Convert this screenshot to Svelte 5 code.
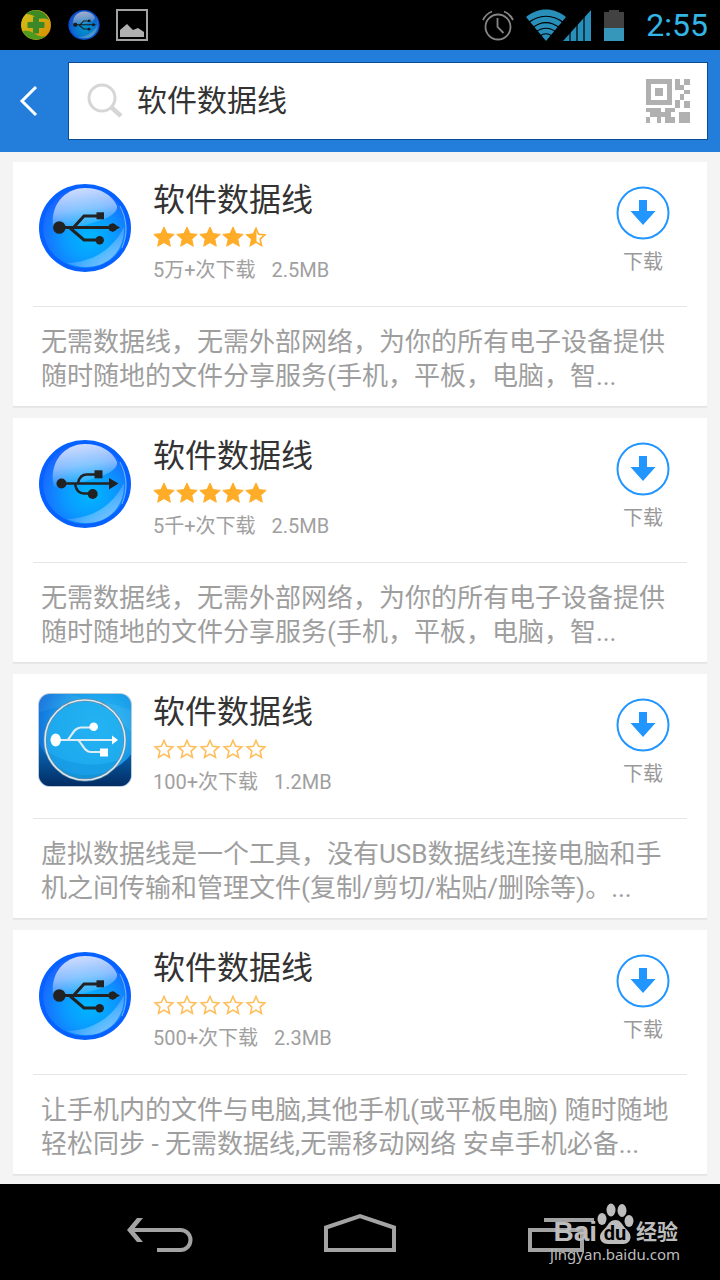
<script>
	let query = $state('软件数据线');

	const apps = [
		{
			name: '软件数据线',
			icon: 'orb-fork',
			rating: 4.5,
			downloads: '5万+次下载',
			size: '2.5MB',
			description:
				'无需数据线，无需外部网络，为你的所有电子设备提供随时随地的文件分享服务(手机，平板，电脑，智...'
		},
		{
			name: '软件数据线',
			icon: 'orb-curve',
			rating: 5,
			downloads: '5千+次下载',
			size: '2.5MB',
			description:
				'无需数据线，无需外部网络，为你的所有电子设备提供随时随地的文件分享服务(手机，平板，电脑，智...'
		},
		{
			name: '软件数据线',
			icon: 'tile',
			rating: 0,
			downloads: '100+次下载',
			size: '1.2MB',
			description:
				'虚拟数据线是一个工具，没有USB数据线连接电脑和手机之间传输和管理文件(复制/剪切/粘贴/删除等)。...'
		},
		{
			name: '软件数据线',
			icon: 'orb-fork',
			rating: 0,
			downloads: '500+次下载',
			size: '2.3MB',
			description:
				'让手机内的文件与电脑,其他手机(或平板电脑) 随时随地轻松同步 - 无需数据线,无需移动网络 安卓手机必备...'
		}
	];

	const starPath = 'M11 1l3 6.6 7.2.8-5.4 4.8 1.5 7L11 16.6l-6.3 3.6 1.5-7L.8 8.4 8 7.6z';
</script>

{#snippet orb(kind)}
	<svg class="orb" viewBox="0 0 94 94" aria-hidden="true">
		<defs>
			<radialGradient id="orb-fill" cx="0.55" cy="0.62" r="0.6">
				<stop offset="0" stop-color="#00b8ff" />
				<stop offset="0.5" stop-color="#0a9aff" />
				<stop offset="1" stop-color="#1a66ff" />
			</radialGradient>
			<linearGradient id="orb-gloss" x1="0.3" y1="0" x2="0.5" y2="1">
				<stop offset="0" stop-color="#fff" stop-opacity="0.8" />
				<stop offset="0.5" stop-color="#fff" stop-opacity="0.5" />
				<stop offset="1" stop-color="#fff" stop-opacity="0" />
			</linearGradient>
			<linearGradient id="orb-shine" x1="0.3" y1="0.3" x2="1" y2="1">
				<stop offset="0" stop-color="#fff" stop-opacity="0" />
				<stop offset="1" stop-color="#fff" stop-opacity="0.6" />
			</linearGradient>
		</defs>
		<ellipse cx="47" cy="47" rx="46" ry="44" fill="#0561ff" />
		<ellipse cx="47" cy="47" rx="42" ry="40" fill="url(#orb-fill)" />
		<path d="M16 50C10 26 26 7 47 7c16 0 27 7 32 18 1 9-14 14-28 18-12 4-23 7-35 7z" fill="url(#orb-gloss)" />
		<path d="M86 46c1 22-14 40-38 40-8 0-14-2-19-4 27-1 46-14 57-36z" fill="url(#orb-shine)" />
		<path d="M82 25c7 13 8 28 2 42" fill="none" stroke="#7fc4ff" stroke-width="1" opacity="0.8" />
		{#if kind === 'orb-fork'}
			<g fill="none" stroke="#222" stroke-width="3">
				<path d="M21 46.500h54M36 46l10-11h14M32 47l14 12h15" />
			</g>
			<g fill="#222">
				<circle cx="21.300" cy="46.500" r="6.300" />
				<circle cx="74.500" cy="46.500" r="4" />
				<path d="M74 42l8 4.500-8 4.500z" />
				<path d="M58.500 31.300h7.500v7h-7.500z" />
				<circle cx="61.700" cy="59.300" r="4.200" />
			</g>
		{:else}
			<g fill="none" stroke="#222" stroke-width="2.400">
				<path d="M23 46.500h50M40 46c1-5 4-8.500 9-8.500h9M37 47c1 6 4 9.500 9 9.500h7" />
			</g>
			<g fill="#222">
				<circle cx="23.500" cy="46.500" r="5" />
				<path d="M71 41l9.500 5.500-9.500 6z" />
				<path d="M56.500 33.300h8v8h-8z" />
				<circle cx="54.700" cy="57" r="5" />
			</g>
		{/if}
	</svg>
{/snippet}

{#snippet tile()}
	<svg viewBox="0 0 94 94" aria-hidden="true">
		<defs>
			<radialGradient id="tile-fill" cx="0.65" cy="0.35" r="0.8">
				<stop offset="0" stop-color="#2fc0fa" />
				<stop offset="0.5" stop-color="#1a9fea" />
				<stop offset="1" stop-color="#0b5cd8" />
			</radialGradient>
			<linearGradient id="tile-dark" x1="0" y1="0" x2="0" y2="1">
				<stop offset="0" stop-color="#0873c6" />
				<stop offset="1" stop-color="#032a60" />
			</linearGradient>
			<clipPath id="tile-clip"><rect x="1" y="1" width="92" height="92" rx="11" /></clipPath>
		</defs>
		<rect x="0" y="0" width="94" height="94" rx="12" fill="#b9cbd9" />
		<g clip-path="url(#tile-clip)">
			<rect width="94" height="94" fill="url(#tile-fill)" />
			<path d="M0 48c8 18 24 34 48 34 20 0 36-8 46-22v34H0z" fill="url(#tile-dark)" />
			<path d="M0 0h30C52 8 76 20 94 40V18C70 6 40 6 0 20z" fill="#fff" opacity="0.06" />
			<circle cx="47" cy="47" r="40" fill="#20aff0" opacity="0.8" />
			<path d="M9 58c12 10 44 20 74 8-8 14-20 21-36 21-18 0-32-11-38-29z" fill="#0d8fda" opacity="0.4" />
		</g>
		<circle cx="47" cy="47" r="40" fill="none" stroke="#5f8aa6" stroke-width="3" />
		<circle cx="47" cy="47" r="40" fill="none" stroke="#dde9f1" stroke-width="1.600" />
		<g fill="none" stroke="#dfecf4" stroke-width="2.200">
			<path d="M17 47h58M30 46.500c4-4 6-12 13-12h12M40 47c5 4 6 12 13 12h10" />
		</g>
		<g fill="#fff">
			<ellipse cx="17.700" cy="47" rx="5.200" ry="6.500" />
			<path d="M74 42.500l6 4.500-6 4.500z" />
			<circle cx="55.700" cy="33.700" r="4.300" />
			<path d="M62 55.500h8v8h-8z" />
		</g>
	</svg>
{/snippet}

{#snippet star(fill)}
	<svg viewBox="0 0 22 22" aria-hidden="true">
		{#if fill >= 1}
			<path d={starPath} fill="#ffad29" stroke="#ffad29" stroke-width="1" stroke-linejoin="round" />
		{:else}
			<path
				d="M11 2.500l2.600 5.800 6.200.6-4.700 4.200 1.400 6.200-5.500-3.200-5.500 3.200 1.400-6.200L2.200 8.900l6.200-.6z"
				fill="#fff"
				stroke={fill > 0 ? '#ffad29' : '#ffbe5c'}
				stroke-width="1.600"
			/>
			{#if fill > 0}
				<path d="M11.500 1L8 7.600.8 8.400l5.400 4.800-1.500 7 6.800-3.900z" fill="#ffad29" />
			{/if}
		{/if}
	</svg>
{/snippet}

<div class="screen">
	<div class="status-bar">
		<div class="status-left">
			<svg viewBox="0 0 32 32" aria-hidden="true">
				<defs>
					<linearGradient id="guard" x1="0" y1="0" x2="1" y2="1">
						<stop offset="0" stop-color="#d0c51f" />
						<stop offset="1" stop-color="#d98b00" />
					</linearGradient>
				</defs>
				<circle cx="16" cy="16" r="15" fill="url(#guard)" />
				<path d="M6 5C14-2 25 1 29 11c-5-3-8 0-12-2-4-3-7-4-11-4z" fill="#3d8a22" />
				<path d="M3 22c3 8 14 12 23 5-5 1-8 0-11-2-4-3-8-4-12-3z" fill="#4c9a20" />
				<path
					d="M13.500 8h5v5.500H24v5h-5.500V24h-5v-5.500H8v-5h5.500z"
					fill="#3c8727"
					stroke="#3c8727"
					stroke-linejoin="round"
				/>
			</svg>
			{@render orb('orb-fork')}
			<svg viewBox="0 0 32 32" aria-hidden="true">
				<rect x="1" y="1" width="30" height="30" fill="none" stroke="#a3a3a3" stroke-width="2" />
				<path d="M4 28v-7l7-6 6 6 5-2 6 4v5z" fill="#b0b0b0" />
			</svg>
		</div>
		<div class="status-right">
			<svg class="alarm" viewBox="0 0 32 32" aria-hidden="true">
				<g fill="none" stroke="#858585" stroke-width="1.800">
					<circle cx="16" cy="18" r="12.500" />
					<path d="M15.500 9v9l6 6M1 11c2-4 5-7 9-8.500M31 11c-2-4-5-7-9-8.500" />
				</g>
			</svg>
			<svg class="signal" viewBox="0 0 66 32" aria-hidden="true">
				<path d="M20 32L0 8c12-10 28-10 40 0z" fill="#278fba" />
				<g fill="none" stroke="#000" stroke-width="1.200">
					<path d="M2 14c11-9 25-9 36 0M6 19c9-7 19-7 28 0M10 23c6-5 14-5 20 0M14 27c4-3 8-3 12 0" />
				</g>
				<path d="M37 32L65 1v31z" fill="#278fba" />
				<path d="M44 18v14M51 12v20M58 5v27" stroke="#000" stroke-width="1.200" />
			</svg>
			<svg class="battery" viewBox="0 0 20 32" aria-hidden="true">
				<path d="M5 1h10v2h5v16H0V3h5z" fill="#424242" />
				<path d="M0 19h20v13H0z" fill="#3797bb" />
			</svg>
			<span class="time">2:55</span>
		</div>
	</div>

	<header>
		<button class="back" aria-label="返回">
			<svg viewBox="0 0 20 32" aria-hidden="true">
				<path d="M17 2L3 16l14 14" fill="none" stroke="#fff" stroke-width="3" />
			</svg>
		</button>
		<div class="search">
			<svg class="magnifier" viewBox="0 0 36 36" aria-hidden="true">
				<g fill="none" stroke="#d6d6d6">
					<circle cx="15" cy="15" r="13" stroke-width="3" />
					<path d="M24 24l10 9" stroke-width="4.500" />
				</g>
			</svg>
			<input type="text" aria-label="搜索" bind:value={query} />
			<button class="scan" aria-label="扫描二维码">
				<svg viewBox="0 0 44 44" shape-rendering="crispEdges" aria-hidden="true">
					<g fill="#b0b0b0">
						<path d="M0 0h26v26H0zM5 5v16h16V5z" fill-rule="evenodd" />
						<path d="M9 9h8v8H9z" />
						<path d="M29 0h5v6h4v5h-9zM38 0h6v6h-6zM38 11h6v4h-6zM34 15h4v6h-4v8h-5v-8h5zM38 22h6v7h-6z" />
						<path d="M0 29h15v4h4v-4h10v4h-4v5h4v6H19v-6h-4v6h-4v-6H4v6H0v-6h4v-5H0z" />
						<path d="M33 33h11v11H33z" />
					</g>
				</svg>
			</button>
		</div>
	</header>

	<main>
		{#each apps as app}
			<article class="card">
				<div class="summary">
					<div class="app-icon">
						{#if app.icon === 'tile'}
							{@render tile()}
						{:else}
							{@render orb(app.icon)}
						{/if}
					</div>
					<div class="info">
						<h2>{app.name}</h2>
						<div class="stars" role="img" aria-label="{app.rating} / 5">
							{#each [0, 1, 2, 3, 4] as i}
								{@render star(app.rating - i)}
							{/each}
						</div>
						<div class="meta">
							<span>{app.downloads}</span>
							<span>{app.size}</span>
						</div>
					</div>
					<button class="download">
						<svg viewBox="0 0 54 54" aria-hidden="true">
							<circle cx="27" cy="27" r="25.500" fill="none" stroke="#2196ff" stroke-width="2" />
							<path d="M23 14h8v11h8.500L27 39 14.500 25H23z" fill="#2196ff" />
						</svg>
						<span>下载</span>
					</button>
				</div>
				<p>{app.description}</p>
			</article>
		{/each}
	</main>

	<nav>
		<button aria-label="后退">
			<svg viewBox="0 0 72 48" aria-hidden="true">
				<path d="M19 10h-6L3 22l10 12h6L9 22z" fill="#a3a3a3" />
				<path d="M6 22h50.500a10 10 0 0 1 0 20H33" fill="none" stroke="#a3a3a3" stroke-width="4" />
			</svg>
		</button>
		<button aria-label="主页">
			<svg viewBox="0 0 72 48" aria-hidden="true">
				<path d="M2 42V19.500L36 8l34 11.500V42z" fill="none" stroke="#a3a3a3" stroke-width="4" />
			</svg>
		</button>
		<button aria-label="最近任务">
			<svg viewBox="0 0 72 48" aria-hidden="true">
				<g fill="none" stroke="#a3a3a3" stroke-width="4">
					<path d="M6 22h52v20H6z" />
					<path d="M20 12h50" />
				</g>
			</svg>
		</button>

		<div class="watermark">
			<div class="brand">
				<span class="bai">Bai</span>
				<span class="paw">
					<svg viewBox="0 0 36 42" aria-hidden="true">
						<g fill="#bdbdbd">
							<ellipse cx="5" cy="17" rx="4.500" ry="6" />
							<ellipse cx="14" cy="8" rx="4.500" ry="6.500" />
							<ellipse cx="25" cy="8.500" rx="4.500" ry="6.500" />
							<ellipse cx="32" cy="19" rx="4.500" ry="6" />
							<path d="M18.500 18c4 0 6 3 8 6 3 4 7 6 7 11 0 4-3 7-7 7H11c-5 0-8-3-8-7 0-5 4-7 7-11 2-3 4-6 8.500-6z" />
						</g>
					</svg>
					<span class="du">du</span>
				</span>
				<span class="exp">经验</span>
			</div>
			<div class="url">jingyan.baidu.com</div>
		</div>
	</nav>
</div>

<style>
	:global(body) {
		background: #000;
	}

	.screen {
		display: flex;
		flex-direction: column;
		min-height: 100vh;
		background: #f4f4f4;
		font-family: Roboto, 'Noto Sans CJK SC', sans-serif;
	}

	svg {
		display: block;
		overflow: visible;
	}

	button {
		padding: 0;
		border: none;
		background: none;
		font-family: inherit;
		cursor: pointer;
	}

	.status-bar {
		display: flex;
		justify-content: space-between;
		align-items: center;
		height: 50px;
		padding: 0 12px 0 20px;
		background: #000;
	}

	.status-left,
	.status-right {
		display: flex;
		align-items: center;
	}

	.status-left {
		gap: 16px;
	}

	.status-left svg {
		width: 32px;
		height: 32px;
	}

	.status-left .orb {
		opacity: 0.8;
	}

	.status-right {
		gap: 12px;
	}

	.status-right svg {
		height: 32px;
	}

	.alarm {
		width: 32px;
	}

	.signal {
		width: 66px;
	}

	.battery {
		width: 20px;
	}

	.time {
		margin-left: 10px;
		font-size: 32px;
		line-height: 48px;
		color: #33b5e5;
	}

	header {
		display: flex;
		align-items: center;
		height: 102px;
		padding-right: 12px;
		background: #237ddb;
	}

	.back {
		display: flex;
		align-items: center;
		justify-content: center;
		width: 68px;
		height: 78px;
		padding-right: 10px;
		box-sizing: border-box;
	}

	.back svg {
		width: 20px;
		height: 32px;
	}

	.search {
		display: flex;
		flex: 1;
		align-items: center;
		height: 78px;
		padding: 0 17px 0 18px;
		box-sizing: border-box;
		border: 1px solid #0b4c97;
		background: #fff;
	}

	.magnifier {
		width: 36px;
		height: 36px;
	}

	input {
		flex: 1;
		min-width: 0;
		height: 60px;
		padding: 0 14px 6px;
		box-sizing: border-box;
		border: none;
		outline: none;
		background: none;
		font-family: inherit;
		font-size: 30px;
		color: #333;
	}

	.scan svg {
		width: 44px;
		height: 44px;
	}

	main {
		display: flex;
		flex: 1;
		flex-direction: column;
		gap: 11px;
		padding: 10px 13px 9px;
	}

	.card {
		padding: 0 20px;
		border-bottom: 1px solid #e4e4e4;
		background: #fff;
		box-shadow: 0 1px 1px #e9e9e9;
	}

	.summary {
		display: flex;
		align-items: flex-start;
		height: 144px;
		border-bottom: 1px solid #e6e6e6;
	}

	.app-icon {
		margin: 19px 0 0 5px;
	}

	.app-icon svg {
		width: 94px;
		height: 94px;
	}

	.info {
		flex: 1;
		padding: 18px 0 0 21px;
	}

	h2 {
		margin: 0;
		font-size: 32px;
		font-weight: 400;
		line-height: 40px;
		color: #333;
	}

	.stars {
		display: flex;
		gap: 1px;
		margin: 6px 0 10px;
	}

	.stars svg {
		width: 22px;
		height: 22px;
	}

	.meta {
		display: flex;
		gap: 16px;
		font-size: 20px;
		line-height: 24px;
		color: #a0a0a0;
	}

	.download {
		display: flex;
		flex-direction: column;
		align-items: center;
		gap: 10px;
		margin: 24px 17px 0 0;
		font-size: 20px;
		line-height: 24px;
		color: #999;
	}

	.download svg {
		width: 54px;
		height: 54px;
	}

	p {
		margin: 0;
		padding: 18px 8px 13px;
		font-size: 26px;
		line-height: 34px;
		color: #9e9e9e;
	}

	nav {
		position: relative;
		display: grid;
		grid-template-columns: repeat(3, 200px);
		justify-content: center;
		align-items: center;
		justify-items: center;
		height: 96px;
		background: #000;
	}

	nav button svg {
		width: 72px;
		height: 48px;
	}

	.watermark {
		position: absolute;
		right: 40px;
		bottom: 16px;
		color: #bdbdbd;
	}

	.brand {
		display: flex;
		justify-content: flex-end;
		align-items: flex-end;
		padding-right: 2px;
	}

	.bai {
		font-family: 'Liberation Sans', sans-serif;
		font-size: 28px;
		font-weight: 700;
		line-height: 24px;
	}

	.paw {
		position: relative;
	}

	.paw svg {
		width: 36px;
		height: 42px;
	}

	.du {
		position: absolute;
		right: 0;
		bottom: 0;
		left: 0;
		font-size: 20px;
		font-weight: 700;
		line-height: 22px;
		text-align: center;
		color: #000;
	}

	.exp {
		margin-left: 3px;
		font-size: 21px;
		font-weight: 700;
		line-height: 24px;
	}

	.url {
		font-family: 'Noto Sans', sans-serif;
		font-size: 15px;
		line-height: 20px;
	}
</style>
